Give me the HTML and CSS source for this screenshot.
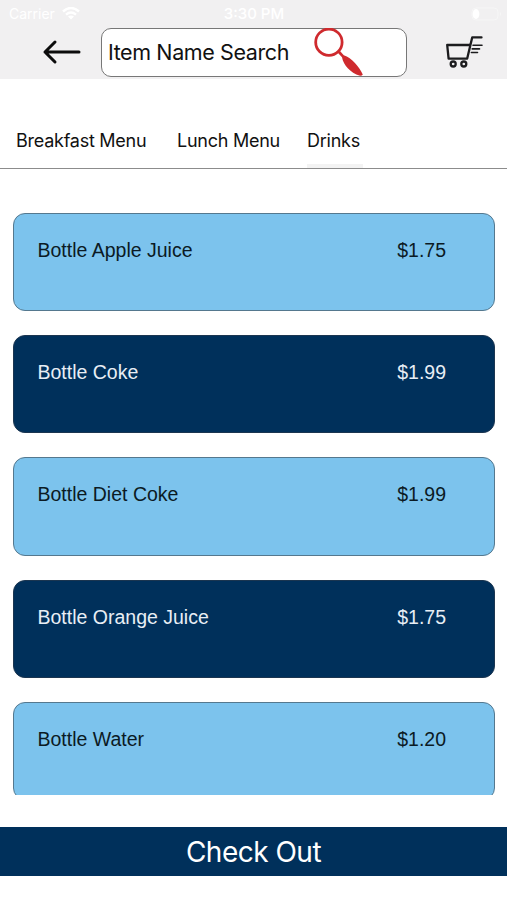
FILE: index.html
```html
<!DOCTYPE html>
<html lang="en">
  <head>
    <meta charset="UTF-8" />
    <meta name="viewport" content="width=device-width, initial-scale=1.0" />
    <title>Drinks Menu</title>
    <link rel="stylesheet" href="styles.css">
  </head>
  <body>
    <header>
      <div class="status-bar">
        <div class="carrier">
          <span>Carrier</span>
          <svg width="18" height="13" viewBox="0 0 18 13">
            <path d="M1 4.5Q9 -2.5 17 4.5M4 7.6Q9 3.4 14 7.6" fill="none" stroke="#fff" stroke-width="2.4" />
            <path d="M6 9.6Q9 7.4 12 9.6L9 12.6Z" fill="#fff" />
          </svg>
        </div>
        <span class="clock">3:30 PM</span>
        <svg class="battery" width="32" height="14" viewBox="0 0 32 14">
          <rect x="1" y="1" width="26" height="12" rx="4" fill="none" stroke="#f6f6f6" />
          <ellipse cx="5" cy="7" rx="3.4" ry="5" fill="#fff" />
          <path d="M29 5Q31 7 29 9Z" fill="#f6f6f6" />
        </svg>
      </div>
      <div class="search-row">
        <a class="back" href="#" aria-label="Back">
          <svg width="40" height="26" viewBox="0 0 40 26">
            <path d="M14 3L4 13L14 23M4 13H38" fill="none" stroke="#0c0c0c" stroke-width="3" stroke-linecap="round" stroke-linejoin="round" />
          </svg>
        </a>
        <div class="search-box">
          <span>Item Name Search</span>
          <svg width="50" height="48" viewBox="0 0 50 48">
            <circle cx="14.9" cy="14.2" r="13.2" fill="none" stroke="#cf2a2e" stroke-width="2.8" />
            <path d="M23.8 24.8L26 22.9L29.8 27.2C38 30 45 38.5 48.8 46.4Q48 48 46 47.8C36 44.5 29.5 37 28 29.2Z" fill="#cf2a2e" />
          </svg>
        </div>
        <a class="cart" href="#" aria-label="Cart">
          <svg width="40" height="34" viewBox="0 0 40 34">
            <g fill="none" stroke="#1c1c1e" stroke-linecap="round" stroke-linejoin="round">
              <path d="M24.5 10H2.2L3.6 23.6H22.2L27.2 2.4H36.5" stroke-width="2.3" />
              <path d="M28 10.3H37M27.2 13.9H34.5M26.4 17.5H32.5" stroke-width="1.6" />
              <circle cx="8.2" cy="29" r="2.5" stroke-width="2.3" />
              <circle cx="18.8" cy="29" r="2.5" stroke-width="2.3" />
            </g>
          </svg>
        </a>
      </div>
    </header>

    <nav>
      <a class="breakfast" href="#">Breakfast Menu</a>
      <a class="lunch" href="#">Lunch Menu</a>
      <a class="drinks active" href="#">Drinks</a>
    </nav>

    <!-- Drinks list -->
    <main class="menu-list">
      <div class="item light">
        <span class="name">Bottle Apple Juice</span>
        <span class="price">$1.75</span>
      </div>
      <div class="item dark">
        <span class="name">Bottle Coke</span>
        <span class="price">$1.99</span>
      </div>
      <div class="item light">
        <span class="name">Bottle Diet Coke</span>
        <span class="price">$1.99</span>
      </div>
      <div class="item dark">
        <span class="name">Bottle Orange Juice</span>
        <span class="price">$1.75</span>
      </div>
      <div class="item light">
        <span class="name">Bottle Water</span>
        <span class="price">$1.20</span>
      </div>
    </main>

    <button class="checkout">Check Out</button>
  </body>
</html>
```
FILE: styles.css
```css
* {
  box-sizing: border-box;
}

body {
  margin: 0;
  height: 900px;
  display: flex;
  flex-direction: column;
  overflow: hidden;
  background: #fff;
  color: #111;
  font-family: Inter, "Liberation Sans", sans-serif;
}

a {
  color: inherit;
  text-decoration: none;
}

svg {
  display: block;
}

/* Header */
header {
  height: 79px;
  background: #f1f0f1;
}

.status-bar {
  height: 27px;
  padding: 0 4px 0 9px;
  display: grid;
  grid-template-columns: 1fr auto 1fr;
  align-items: center;
  color: #fff;
  font-size: 14px;
}

.carrier {
  display: flex;
  align-items: center;
  gap: 7px;
}

.clock {
  padding-right: 4px;
  font-weight: 500;
  font-size: 15px;
}

.battery {
  justify-self: end;
}

.search-row {
  display: flex;
  align-items: center;
  height: 50px;
}

.back {
  margin-left: 41px;
  width: 60px;
}

.search-box {
  display: flex;
  align-items: center;
  justify-content: space-between;
  width: 306px;
  height: 49px;
  padding: 0 42px 0 6px;
  border: 1px solid #777;
  border-radius: 10px;
  background: #fff;
  font-size: 21.5px;
  letter-spacing: -0.4px;
}

.search-box span {
  white-space: nowrap;
}

.cart {
  margin-left: 38px;
}

/* Menu tabs */
nav {
  display: flex;
  height: 90px;
  padding-left: 16px;
  border-bottom: 1px solid #8c8c8c;
  font-size: 18px;
  line-height: 24px;
  letter-spacing: -0.25px;
}

nav a {
  padding-top: 50px;
  white-space: nowrap;
}

.breakfast {
  width: 161px;
}

.lunch {
  width: 130px;
}

.drinks {
  width: 56px;
}

.active {
  border-bottom: 4px solid #f3f3f3;
}

/* Items */
.menu-list {
  display: flex;
  flex-direction: column;
  gap: 24px;
  height: 582px;
  margin-top: 44px;
  padding: 0 12px 0 13px;
  overflow: hidden;
}

.item {
  display: flex;
  flex-shrink: 0;
  justify-content: space-between;
  height: 98.2px;
  padding: 25px 48px 0 23.5px;
  border: 1px solid #55788e;
  border-radius: 12px;
  font-family: "Liberation Sans", Arial, sans-serif;
  font-size: 19.5px;
  line-height: 23px;
}

.light {
  background: #7cc3ed;
  color: #0b1a24;
}

.dark {
  background: #00305b;
  border-color: #1b3550;
  color: #e8eef5;
}

/* Check out bar */
.checkout {
  flex-shrink: 0;
  height: 49px;
  margin-top: 32px;
  padding: 0 0 0 0;
  border: none;
  background: #00305b;
  color: #fff;
  font-family: Inter, "Liberation Sans", sans-serif;
  font-size: 28px;
  letter-spacing: -0.5px;
}
```
